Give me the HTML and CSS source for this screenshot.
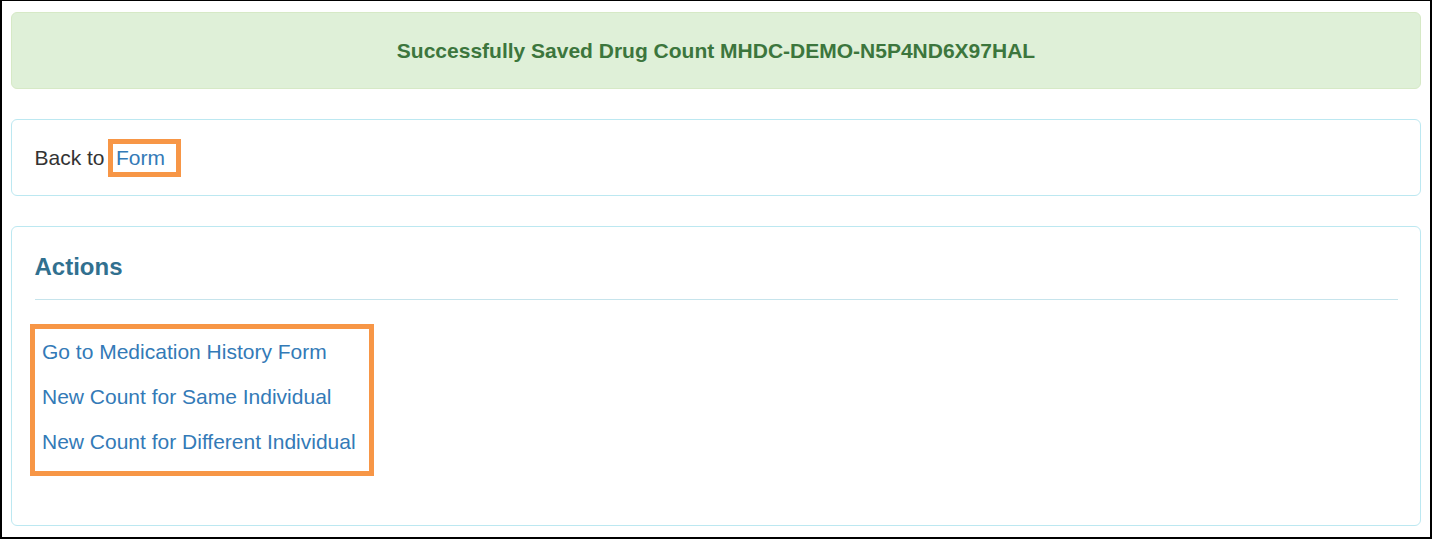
FILE: index.html
```html
<!DOCTYPE html>
<html lang="en">
<head>
<meta charset="utf-8">
<title>Drug Count Saved</title>
<link rel="stylesheet" href="styles.css">
</head>
<body>
<div class="frame">
  <div class="alert">Successfully Saved Drug Count MHDC-DEMO-N5P4ND6X97HAL</div>
  <div class="panel">
    <div class="panel-body back">Back to <a class="mark form-link" href="#">Form</a></div>
  </div>
  <div class="panel panel-last">
    <div class="panel-body">
      <h4 class="heading">Actions</h4>
      <hr class="rule">
      <div class="mark action-list">
        <a class="action" href="#">Go to Medication History Form</a>
        <a class="action" href="#">New Count for Same Individual</a>
        <a class="action" href="#">New Count for Different Individual</a>
      </div>
    </div>
  </div>
</div>
</body>
</html>
```

FILE: styles.css
```css
* { box-sizing: border-box; }
html, body { margin: 0; padding: 0; background: #fff; }
body {
  font-family: "Liberation Sans", Arial, sans-serif;
  font-size: 21px;
  line-height: 30px;
  color: #333;
}
.frame {
  width: 1432px;
  height: 539px;
  border-style: solid;
  border-color: #000;
  border-width: 1px 2px 2px 2px;
  padding: 11px 9px 11px 9px;
}
.alert {
  background: #dff0d8;
  border: 1px solid #d6e9c6;
  border-radius: 6px;
  color: #3c763d;
  font-weight: bold;
  text-align: center;
  padding: 22.5px;
  margin-bottom: 30px;
}
.panel {
  border: 1px solid #bce8f1;
  border-radius: 6px;
  margin-bottom: 30px;
  background: #fff;
}
.panel-last { margin-bottom: 0; }
.panel-body { padding: 22.5px; }
a { color: #337ab7; text-decoration: none; }
.mark { border: 5px solid #f79646; }
.form-link {
  display: inline-block;
  line-height: 28px;
  margin: -4px 0 -4px -2.5px;
  padding: 0 11px 0 3px;
  vertical-align: baseline;
}
.heading {
  margin: 4px 0 0 0;
  font-size: 24px;
  line-height: 26.4px;
  font-weight: bold;
  color: #31708f;
}
.rule {
  margin: 19px 0 0 0;
  border: 0;
  border-top: 1px solid #c6e4ec;
  height: 0;
}
.action-list {
  display: inline-flex;
  flex-direction: column;
  margin: 24px 0 26.5px -4.5px;
  padding: 0 13px 7px 7px;
}
.action {
  line-height: 45px;
}
```
